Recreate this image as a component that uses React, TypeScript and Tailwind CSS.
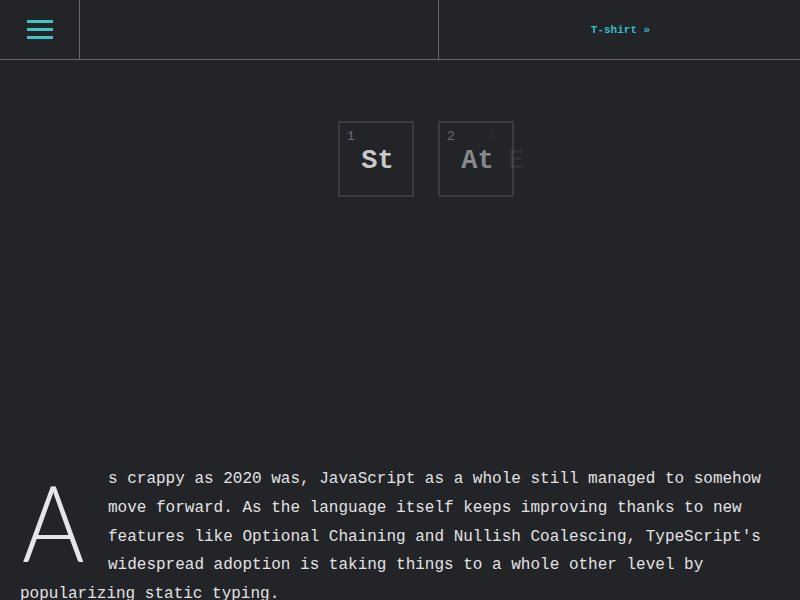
import React from 'react';

const mono = { fontFamily: '"Liberation Mono", "DejaVu Sans Mono", monospace' };

const Tile: React.FC<{ n: number; sym: string; tone: string }> = ({ n, sym, tone }) => (
  <div className="relative w-[76px] h-[76px] border-2 border-[#3a3b3f] flex items-center justify-center">
    <span className="absolute left-[7px] top-[4px] text-[13px] text-[#6a6b70]">{n}</span>
    <span className={`text-[27px] font-bold mt-[4px] ml-[3px] ${tone}`}>{sym}</span>
  </div>
);

export default function App() {
  return (
    <div className="min-h-screen w-full bg-[#232428] text-[#e2e2e4] overflow-hidden" style={mono}>
      <header className="flex h-[60px] border-b border-[#68686c]">
        <button className="w-[80px] flex flex-col items-center justify-center gap-[5px] border-r border-[#68686c]" aria-label="menu">
          <span className="block w-[26px] h-[3px] bg-[#3fc6c4]" />
          <span className="block w-[26px] h-[3px] bg-[#3fc6c4]" />
          <span className="block w-[26px] h-[3px] bg-[#3fc6c4]" />
        </button>
        <div className="w-[359px] border-r border-[#68686c]" />
        <div className="flex-1 flex items-center justify-center">
          <a className="text-[11px] font-bold text-[#34bcc8] mt-[1px] ml-[2px]">T-shirt »</a>
        </div>
      </header>

      <section className="h-[405px] pt-[61px]">
        <div className="relative flex gap-[24px] ml-[338px]">
          <Tile n={1} sym="St" tone="text-[#c9c9cb]" />
          <Tile n={2} sym="At" tone="text-[#88898c]" />
          <div className="absolute left-[142px] top-0 w-[76px] h-[76px] opacity-[0.07] flex items-center justify-center">
            <span className="absolute left-[7px] top-[4px] text-[13px] text-[#c0c0c0]">3</span>
            <span className="text-[27px] font-bold text-[#d0d0d0] mt-[4px] -ml-[4px]">E</span>
          </div>
        </div>
      </section>

      <article className="px-5">
        <p className="text-[16px] leading-[28.8px]">
          <span
            className="float-left w-[88px] text-[106px] leading-[86px] font-light text-[#e6e6e8] mt-[13px]"
            style={{ fontFamily: 'Lato, "Open Sans", "Liberation Sans", sans-serif' }}
          >
            <span className="inline-block origin-left scale-x-[0.9] ml-[2px]">A</span>
          </span>
          s crappy as 2020 was, JavaScript as a whole still managed to somehow move forward. As the
          language itself keeps improving thanks to new features like Optional Chaining and Nullish
          Coalescing, TypeScript's widespread adoption is taking things to a whole other level by
          popularizing static typing.
        </p>
      </article>
    </div>
  );
}
